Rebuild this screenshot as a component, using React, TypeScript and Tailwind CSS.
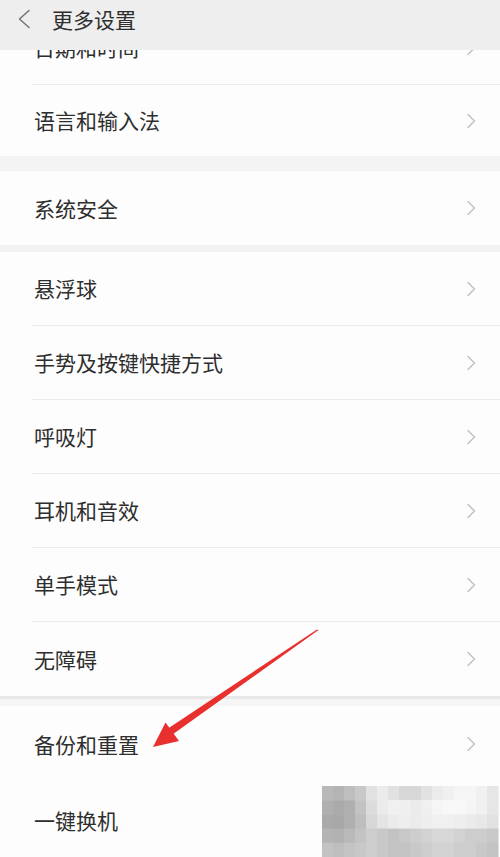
import React from "react";

const FONT = { fontFamily: '"Noto Sans CJK SC", "Noto Sans", sans-serif' };

// grey levels for the pixelated watermark in the bottom-right corner
const MOSAIC = [
  [185, 180, 190, 200, 225, 235, 225, 215, 215, 225, 235, 240, 245, 245, 240, 230],
  [175, 170, 175, 195, 220, 235, 240, 240, 235, 240, 245, 248, 248, 245, 240, 230],
  [170, 168, 175, 190, 215, 228, 235, 238, 235, 238, 240, 240, 238, 235, 232, 225],
  [180, 178, 185, 195, 205, 200, 195, 200, 205, 210, 215, 215, 210, 205, 205, 200],
  [195, 190, 195, 200, 205, 200, 195, 195, 200, 205, 210, 210, 205, 205, 200, 195],
];

function Chevron() {
  return (
    <svg width="10" height="16" viewBox="0 0 10 16" fill="none">
      <path d="M2 1.5 L8.5 8 L2 14.5" stroke="#c4c4c4" strokeWidth="1.6" strokeLinecap="round" strokeLinejoin="round" />
    </svg>
  );
}

function Row({ label, h = "h-[74px]", last = false }: { label: string; h?: string; last?: boolean }) {
  return (
    <div className="pl-[32px] bg-[#fdfdfd]">
      <div
        className={`${h} flex items-center justify-between pr-[24px] ${last ? "" : "border-b border-[#ececec]"}`}
      >
        <span className="pl-[2px] text-[21px] text-[#2e2e2e] leading-none">{label}</span>
        <Chevron />
      </div>
    </div>
  );
}

export default function App() {
  return (
    <div className="relative flex h-[857px] w-[500px] flex-col overflow-hidden bg-[#fdfdfd]" style={FONT}>
      {/* Title bar */}
      <div className="h-[50px] shrink-0 bg-[#eeeeee]">
        <div className="flex h-[38px] items-center">
          <svg width="14" height="20" viewBox="0 0 14 20" fill="none" className="ml-[17px]">
            <path d="M12 1.5 L2.5 10 L12 18.5" stroke="#777777" strokeWidth="1.6" strokeLinecap="round" strokeLinejoin="round" />
          </svg>
          <span className="ml-[21px] text-[21px] leading-none text-[#2e2e2e]">更多设置</span>
        </div>
      </div>

      {/* Scrolled list */}
      <div className="flex-1 overflow-hidden">
        <div className="-mt-[39px]">
          <Row label="日期和时间" />
          <Row label="语言和输入法" h="h-[71px]" last />
          <div className="h-[15px] bg-[#f4f4f4]" />
          <Row label="系统安全" last />
          <div className="h-[7px] bg-[#f2f2f2]" />
          <Row label="悬浮球" />
          <Row label="手势及按键快捷方式" />
          <Row label="呼吸灯" />
          <Row label="耳机和音效" />
          <Row label="单手模式" />
          <Row label="无障碍" last />
          <div className="h-[10px] border-t-[3px] border-[#e8e8e8] bg-[#f6f6f6]" />
          <Row label="备份和重置" h="h-[76px]" last />
          <Row label="一键换机" h="h-[76px]" last />
        </div>
      </div>

      {/* Red annotation arrow */}
      <svg className="pointer-events-none absolute left-0 top-0" width="500" height="857" viewBox="0 0 500 857">
        <polygon points="168,728.5 172.5,734.5 318.5,630 317,629.5" fill="#e8312f" />
        <polygon points="153,747 165.5,722.5 179,741" fill="#e8312f" />
      </svg>

      {/* Pixelated watermark */}
      <svg className="pointer-events-none absolute left-[320px] top-[786px]" width="180" height="71" viewBox="0 0 176 71">
        {MOSAIC.map((row, r) =>
          row.map((g, c) => (
            <rect key={`${r}-${c}`} x={c * 11} y={r * 14.2} width="11.5" height="14.7" fill={`rgb(${g},${g},${g})`} />
          ))
        )}
      </svg>
    </div>
  );
}
